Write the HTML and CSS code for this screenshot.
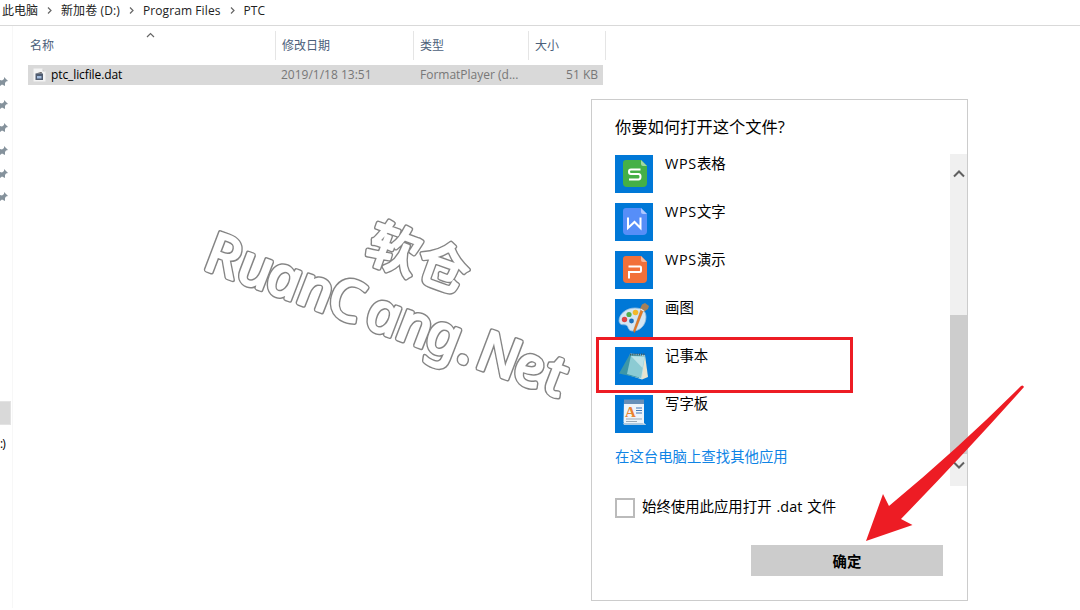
FILE: index.html
```html
<!DOCTYPE html>
<html lang="zh-CN">
<head>
<meta charset="utf-8">
<title>PTC</title>
<link rel="stylesheet" href="styles.css">
</head>
<body>
<div class="explorer">
  <nav class="path">
    <span class="crumb crumb-pc">此电脑</span>
    <svg class="sep" viewBox="0 0 5 7"><path d="M1 .5 4 3.5 1 6.5"/></svg>
    <span class="crumb crumb-drive">新加卷 (D:)</span>
    <svg class="sep" viewBox="0 0 5 7"><path d="M1 .5 4 3.5 1 6.5"/></svg>
    <span class="crumb crumb-files">Program Files</span>
    <svg class="sep" viewBox="0 0 5 7"><path d="M1 .5 4 3.5 1 6.5"/></svg>
    <span class="crumb">PTC</span>
  </nav>
  <div class="body">
    <aside class="side">
      <div class="pins">
        <svg class="pin" viewBox="0 0 8 10"><path d="M0 3 2 3.500 4 2 4 0 8 4 6 4.500 5 6 5 9 2 7.500 0 9Z"/></svg>
        <svg class="pin" viewBox="0 0 8 10"><path d="M0 3 2 3.500 4 2 4 0 8 4 6 4.500 5 6 5 9 2 7.500 0 9Z"/></svg>
        <svg class="pin" viewBox="0 0 8 10"><path d="M0 3 2 3.500 4 2 4 0 8 4 6 4.500 5 6 5 9 2 7.500 0 9Z"/></svg>
        <svg class="pin" viewBox="0 0 8 10"><path d="M0 3 2 3.500 4 2 4 0 8 4 6 4.500 5 6 5 9 2 7.500 0 9Z"/></svg>
        <svg class="pin" viewBox="0 0 8 10"><path d="M0 3 2 3.500 4 2 4 0 8 4 6 4.500 5 6 5 9 2 7.500 0 9Z"/></svg>
        <svg class="pin" viewBox="0 0 8 10"><path d="M0 3 2 3.500 4 2 4 0 8 4 6 4.500 5 6 5 9 2 7.500 0 9Z"/></svg>
      </div>
      <div class="side-selected"></div>
      <div class="side-drive">:)</div>
    </aside>
    <main class="files">
      <div class="cols head">
        <div class="cell">名称<svg class="sort" viewBox="0 0 9 6"><path d="M1 5 4.500 1.500 8 5"/></svg></div>
        <div class="cell">修改日期</div>
        <div class="cell">类型</div>
        <div class="cell">大小</div>
      </div>
      <div class="cols row">
        <div class="cell name">
          <svg class="file-icon" viewBox="0 0 13 14"><path d="M.5.500h9l3 3v10H.500z" fill="#f4f4f4"/><path d="M9.500.500v3h3z" fill="#ccc"/><path d="M2.500 5.500 8.500 4l.5 1.500z" fill="#444"/><path d="M2.500 5.500h7.500v6.500H2.500z" fill="#4e5b70"/><path d="M4 8h4.500v2.500H4z" fill="#a4bddd"/></svg>
          <span>ptc_licfile.dat</span>
        </div>
        <div class="cell date">2019/1/18 13:51</div>
        <div class="cell type">FormatPlayer (d...</div>
        <div class="cell size">51 KB</div>
      </div>
    </main>
  </div>
</div>

<svg class="watermark" viewBox="0 0 400 220">
  <defs>
    <g id="mark">
      <g transform="translate(15 70) rotate(19.900)">
        <g class="mark-cjk"><text x="144.500" y="-65">软</text><text x="197" y="-65">仓</text></g>
        <g class="mark-latin" transform="scale(1.060 1) skewX(11)"><text y="-.5" x="-1 31.500 60.500 92 121.500 160.500 191.500 220.500 253.500 271.500 308.500 339">RuanCang.Net</text></g>
      </g>
    </g>
  </defs>
  <use href="#mark" class="mark-edge"/>
  <use href="#mark" class="mark-fill"/>
</svg>

<section class="dialog">
  <h1 class="title">你要如何打开这个文件?</h1>
  <div class="scroller">
    <div class="apps">
      <div class="app"><svg class="tile" viewBox="0 0 38 38"><path d="M11 5h15l6 6v17q0 4-4 4H12q-4 0-4-4V8q0-3 3-3z" fill="#45b047"/><path d="m26 5 6 6h-4q-2 0-2-2z" fill="#a0d9a1"/><path class="glyph" d="M25.500 14.500H16q-2 0-2 2.200t2 2.300h7.500q2 0 2 2.700t-2 2.800H14"/></svg><span><span class="wps">WPS</span>表格</span></div>
      <div class="app"><svg class="tile" viewBox="0 0 38 38"><path d="M11 5h15l6 6v17q0 4-4 4H12q-4 0-4-4V8q0-3 3-3z" fill="#568ef8"/><path d="m26 5 6 6h-4q-2 0-2-2z" fill="#adc8ff"/><path class="glyph" d="M13 14.500V25l6.500-6 6 6V14.500"/></svg><span><span class="wps">WPS</span>文字</span></div>
      <div class="app"><svg class="tile" viewBox="0 0 38 38"><path d="M11 5h15l6 6v17q0 4-4 4H12q-4 0-4-4V8q0-3 3-3z" fill="#f27039"/><path d="m26 5 6 6h-4q-2 0-2-2z" fill="#fab898"/><path class="glyph" d="M13.500 15.500H25q1 0 1 1v3q0 1.500-1.500 1.500H14v6.500"/></svg><span><span class="wps">WPS</span>演示</span></div>
      <div class="app"><svg class="tile" viewBox="0 0 38 38"><path d="M4 22C4 15 11 9 20 9c7 0 11 3 11 9 0 8-6 14-13 14-6 0-4-5-7-6-3-.7-6 1-7-4z" fill="#d4e6f3" stroke="#93bcdd" stroke-width=".8"/><circle cx="9.500" cy="20.500" r="2.700" fill="#dc4545"/><circle cx="14" cy="15.500" r="2.600" fill="#4eaf4c"/><circle cx="20.500" cy="13.500" r="2.800" fill="#f2b92b"/><circle cx="16.500" cy="22" r="2.400" fill="#176fbd"/><path d="M28.500 11 19.500 34l-1-2.500L26 10.500z" fill="#e57c24" stroke="#b05a20" stroke-width=".4"/><path d="m25 10 2-4.500 3-1.500 4 3-1 3-4.500 3z" fill="#a68058"/><path d="m25.500 10 3.500 2.300" stroke="#eee" stroke-width="1.200"/></svg><span>画图</span></div>
      <div class="app"><svg class="tile" viewBox="0 0 38 38"><path d="M30 8 33 30 27 32.500 25 26z" fill="#e8e4ce"/><path d="M15 6.500 30 8l-3 24.500-14-4.500z" fill="#c5e3e8"/><path d="m15 7 12 1.500-3 22.500L4 26.500z" fill="#3d96a7"/><path d="M16 8.500 30 9l-4 22L12 27z" fill="#8ccbd3"/><path d="m16 9 13.500 1-2 11z" fill="#bde3e7"/><path d="M15 7.500h15.500" stroke="#455d62" stroke-width="2" stroke-dasharray="1.200 1"/></svg><span>记事本</span></div>
      <div class="app"><svg class="tile" viewBox="0 0 38 38"><path d="M9 6h20v22l2 2H10l-1.500-3z" fill="#edf4fa"/><path d="M9 4.500h20V9H9z" fill="#668fb8"/><path d="M8 28h19.500l3.500 2H9z" fill="#afcae0"/><text class="a-mark" x="10" y="21.500">A</text><path d="M21 13h6m-6 2.500h6m-6 2.500h6" stroke="#4378b7" stroke-width="1.200"/><path d="M11 24h16m-16 2.500h11" stroke="#99a9b7"/></svg><span>写字板</span></div>
    </div>
    <div class="bar">
      <svg class="chev" viewBox="0 0 12 8"><path d="m1 6.500 5-5 5 5"/></svg>
      <div class="thumb"></div>
      <svg class="chev chev-down" viewBox="0 0 12 8"><path d="m1 1.500 5 5 5-5"/></svg>
    </div>
    <a class="more">在这台电脑上查找其他应用</a>
  </div>
  <label class="always"><span class="box"></span><span class="always-text">始终使用此应用打开 .dat 文件</span></label>
  <button class="ok">确定</button>
</section>

<div class="highlight"></div>
<svg class="arrow" viewBox="860 380 170 165"><path d="M866 541 883 494 889 506Q959 448 1021 386 1023 384.500 1024 387 966 452 901 519L912.500 525Z"/></svg>
</body>
</html>
```
FILE: styles.css
```css
* { box-sizing: border-box; }
body {
  margin: 0;
  width: 1080px;
  height: 610px;
  position: relative;
  overflow: hidden;
  background: #fff;
  color: #000;
  font-family: "Open Sans", "Noto Sans CJK SC", sans-serif;
  font-size: 12px;
}
svg { display: block; }
.explorer { height: 608px; display: flex; flex-direction: column; }
.path {
  height: 26px;
  flex: none;
  display: flex;
  align-items: center;
  padding: 0 0 5px 2px;
  border-bottom: 1px solid #d9d9d9;
  white-space: nowrap;
  color: #222;
}
.crumb-drive { letter-spacing: .1px; }
.crumb-files { letter-spacing: .1px; }
.sep { width: 5px; height: 7px; margin: 1px 9px 0; flex: none; }
.sep path, .sort path { fill: none; stroke: #666; stroke-width: 1.2; }
.body { flex: 1; display: flex; }
.side { width: 13px; border-right: 1px solid #f7f7f7; padding-top: 51px; overflow: hidden; }
.pins { display: flex; flex-direction: column; gap: 13px; height: 324px; }
.pin { width: 8px; height: 10px; flex: none; fill: #85929c; }
.side-selected { width: 11px; height: 24px; background: #d9d9d9; border: 1px solid #e3e3e3; border-left: 0; }
.side-drive { margin-top: 11px; line-height: 16px; letter-spacing: -1px; }
.files { padding: 5px 0 0 15px; width: 593px; }
.cols { display: grid; grid-template-columns: 248px 138px 115px 77px; }
.head { height: 28px; color: #4c607a; }
.head .cell {
  position: relative;
  padding-left: 6px;
  border-right: 1px solid #e5e5e5;
  line-height: 29px;
}
.head .cell:first-child { padding-left: 2px; }
.sort { position: absolute; left: 118px; top: 1px; width: 9px; height: 6px; }
.row {
  margin-top: 6px;
  width: 575px;
  height: 20px;
  line-height: 19px;
  background: #d9d9d9;
  color: #777;
  white-space: nowrap;
}
.name { display: flex; align-items: center; gap: 5px; padding-left: 5px; color: #000; letter-spacing: -.1px; line-height: 18px; }
.file-icon { width: 13px; height: 14px; }
.date { padding-left: 5px; }
.type { padding-left: 6px; }
.size { text-align: right; padding-right: 8px; }

.watermark { position: absolute; left: 190px; top: 200px; width: 400px; height: 220px; }
.mark-cjk { font: 500 52px "Noto Sans CJK SC", sans-serif; }
.mark-latin { font: italic 400 56px "Noto Sans", sans-serif; }
.mark-edge { fill: #858585; stroke: #858585; stroke-width: 5; stroke-linejoin: round; }
.mark-fill { fill: #fff; stroke: #fff; stroke-width: 2.2; stroke-linejoin: round; }

.dialog {
  position: absolute;
  left: 591px;
  top: 99px;
  width: 377px;
  height: 502px;
  border: 1px solid #ccc;
  background: #fff;
  padding-left: 23px;
  font-size: 14.4px;
}
.title { margin: 0; height: 54px; padding-top: 14px; font-size: 16.3px; font-weight: 400; line-height: 26px; }
.scroller { display: grid; grid-template-columns: 1fr 17px; grid-template-rows: 288px 44px; }
.apps { display: flex; flex-direction: column; }
.app { height: 48.1px; flex: none; display: flex; gap: 12px; line-height: 20px; }
.wps { letter-spacing: .7px; }
.tile { width: 38px; height: 38px; margin-top: 1px; flex: none; background: #0078d7; }
.glyph { fill: none; stroke: #fff; stroke-width: 2; }
.a-mark { font: bold 15px "Liberation Serif", serif; fill: #e98432; }
.bar { grid-column: 2; grid-row: 1 / 3; background: #f0f0f0; display: flex; flex-direction: column; align-items: center; padding-top: 16px; }
.chev { width: 12px; height: 8px; flex: none; fill: none; stroke: #606060; stroke-width: 2; }
.thumb { width: 17px; height: 139px; margin-top: 137px; background: #cdcdcd; }
.chev-down { margin-top: 7px; }
.more { color: #0f84e5; line-height: 20px; padding-top: 5px; }
.always { display: flex; align-items: center; gap: 7px; height: 20px; margin-top: 12px; white-space: nowrap; }
.always-text { word-spacing: 1.3px; line-height: 18px; padding-bottom: 2px; }
.box { width: 20px; height: 20px; border: 2px solid #bbb; }
.ok {
  display: block;
  width: 192px;
  height: 31px;
  margin: 27px 0 0 136px;
  padding: 0;
  border: 0;
  background: #ccc;
  color: #000;
  font: bold 14.4px "Open Sans", "Noto Sans CJK SC", sans-serif;
}
.highlight { position: absolute; left: 596px; top: 337px; width: 257px; height: 56px; border: 3px solid #ed1c24; }
.arrow { position: absolute; left: 860px; top: 380px; width: 170px; height: 165px; fill: #ed1c24; }
```
